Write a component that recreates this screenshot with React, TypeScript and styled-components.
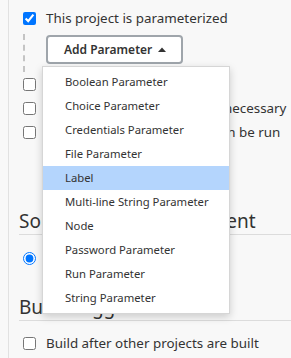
import React from 'react';
import styled, { createGlobalStyle } from 'styled-components';

const Global = createGlobalStyle`
  html, body { margin: 0; padding: 0; background: #f8f8f8; }
  body { font-family: "Noto Sans", "Open Sans", sans-serif; color: #333; overflow: hidden; }
  * { box-sizing: border-box; }
`;

const Page = styled.div`
  width: 291px;
  height: 358px;
  overflow: hidden;
  padding-left: 8px;
`;

const Panel = styled.div`
  height: 100%;
  border-left: 1px solid #e1e1e1;
  padding: 6px 0 0 10px;
`;

const Row = styled.label<{ $mt?: number }>`
  display: flex;
  align-items: center;
  gap: 10px;
  height: 24px;
  padding-left: 4px;
  margin-top: ${p => p.$mt ?? 0}px;
  font-size: 13.4px;
  white-space: nowrap;
  color: #333;
`;

const Check = styled.input`
  width: 13px;
  height: 13px;
  margin: 0;
  flex: none;
`;

const Nested = styled.div`
  margin: 4px 0 0 4px;
  padding: 1px 0 8px 21px;
  border-left: 2px dashed #c4c4c4;
`;

const DropdownWrap = styled.div`
  position: relative;
  display: inline-block;
`;

const AddButton = styled.button`
  display: flex;
  align-items: center;
  gap: 6px;
  height: 29px;
  padding: 0 15px 0 16px;
  background: #fff;
  border: 2px solid #9fa5ab;
  border-radius: 4px;
  font-family: inherit;
  font-size: 12px;
  font-weight: 600;
  color: #333;
`;

const Caret = styled.svg`
  width: 8px;
  height: 5px;
  display: block;
`;

const Menu = styled.ul`
  position: absolute;
  top: calc(100% + 2px);
  left: -4px;
  width: 188px;
  margin: 0;
  padding: 3px 0;
  list-style: none;
  background: #fff;
  border: 1px solid #d6d6d6;
  box-shadow: 0 3px 8px rgba(0, 0, 0, 0.18);
  z-index: 10;
`;

const Item = styled.li<{ $active?: boolean }>`
  height: 24px;
  line-height: 24px;
  padding-left: 22px;
  font-size: 11.3px;
  color: #333;
  white-space: nowrap;
  background: ${p => (p.$active ? '#b4d5fd' : 'transparent')};
`;

const Heading = styled.h2<{ $mt: number }>`
  margin: ${p => p.$mt}px 0 0 0;
  height: 27px;
  line-height: 26px;
  font-size: 19px;
  font-weight: 400;
  color: #333;
  border-bottom: 1px solid #dcdcdc;
  white-space: nowrap;
`;

const items = [
  'Boolean Parameter',
  'Choice Parameter',
  'Credentials Parameter',
  'File Parameter',
  'Label',
  'Multi-line String Parameter',
  'Node',
  'Password Parameter',
  'Run Parameter',
  'String Parameter',
];

export default function App() {
  return (
    <Page>
      <Global />
      <Panel>
        <Row>
          <Check type="checkbox" defaultChecked />
          This project is parameterized
        </Row>
        <Nested>
          <DropdownWrap>
            <AddButton>
              Add Parameter
              <Caret viewBox="0 0 8 5">
                <path d="M0 5 L4 0.5 L8 5 Z" fill="#333" />
              </Caret>
            </AddButton>
            <Menu>
              {items.map(t => (
                <Item key={t} $active={t === 'Label'}>{t}</Item>
              ))}
            </Menu>
          </DropdownWrap>
        </Nested>
        <Row>
          <Check type="checkbox" />
          Throttle builds
        </Row>
        <Row>
          <Check type="checkbox" />
          Execute concurrent builds if necessary
        </Row>
        <Row>
          <Check type="checkbox" />
          Restrict where this project can be run
        </Row>
        <Heading $mt={64}>Source Code Management</Heading>
        <Row $mt={11}>
          <Check type="radio" name="scm" defaultChecked />
          None
        </Row>
        <Heading $mt={24}>Build Triggers</Heading>
        <Row $mt={10}>
          <Check type="checkbox" />
          Build after other projects are built
        </Row>
      </Panel>
    </Page>
  );
}
